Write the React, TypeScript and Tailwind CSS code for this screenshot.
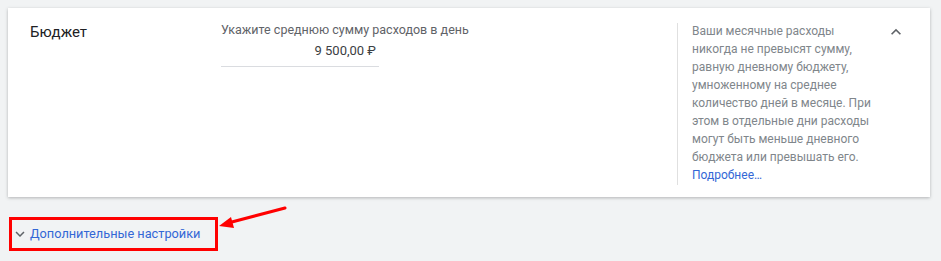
import React from "react";

const font = { fontFamily: "Roboto, 'Noto Sans', Arial, sans-serif" };

const App = () => {
  return (
    <div
      className="relative w-[941px] h-[261px] bg-[#f1f3f4] pt-[8px] overflow-hidden"
      style={font}
    >
      {/* Budget card */}
      <div className="ml-[8px] w-[922px] h-[189px] bg-white shadow-[0_1px_3px_rgba(60,64,67,0.35)] flex">
        <div className="w-[213px] shrink-0 pl-[22px] pt-[14px] text-[15px] leading-5 text-[#202124]">
          Бюджет
        </div>

        <div className="w-[456px] shrink-0 pt-[12px]">
          <div className="text-[12.5px] leading-5 text-[#5f6368]">
            Укажите среднюю сумму расходов в день
          </div>
          <div className="w-[158px] border-b border-[#dadce0] pb-[5px] pt-[1px] text-right pr-[3px] text-[13px] leading-5 text-[#3c4043]">
            9 500,00 ₽
          </div>
        </div>

        <div className="mt-[15px] h-[162px] shrink-0 border-l border-[#e0e0e0] pl-[14px] w-[200px]">
          <p className="-mt-[1px] text-[12px] leading-[18px] text-[#80868b]">
            Ваши месячные расходы никогда не превысят сумму, равную дневному
            бюджету, умноженному на среднее количество дней в месяце. При этом
            в отдельные дни расходы могут быть меньше дневного бюджета или
            превышать его.
          </p>
          <a href="#" className="block text-[12px] leading-[18px] text-[#3367d6]">
            Подробнее…
          </a>
        </div>

        <div className="pl-[9px] pt-[14px]">
          <svg width="20" height="20" viewBox="0 0 24 24" fill="#5f6368">
            <path d="M7.41 15.41 12 10.83l4.59 4.58L18 14l-6-6-6 6z" />
          </svg>
        </div>
      </div>

      {/* More settings link, highlighted */}
      <div className="mt-[20px] ml-[9px] w-[209px] h-[34px] border-[3px] border-[#ff0000] flex items-center">
        <svg width="18" height="18" viewBox="0 0 24 24" fill="#5f6368" className="-ml-[1px]">
          <path d="M7.41 8.59 12 13.17l4.59-4.58L18 10l-6 6-6-6z" />
        </svg>
        <a href="#" className="ml-[1px] text-[12.75px] leading-5 text-[#3367d6]">
          Дополнительные настройки
        </a>
      </div>

      {/* annotation arrow */}
      <svg className="absolute left-0 top-0" width="941" height="261">
        <line x1="285" y1="208" x2="228" y2="223" stroke="#ff0000" strokeWidth="3" strokeLinecap="round" />
        <polygon points="219,226 231,217 234,228" fill="#ff0000" />
      </svg>
    </div>
  );
};

export default App;
